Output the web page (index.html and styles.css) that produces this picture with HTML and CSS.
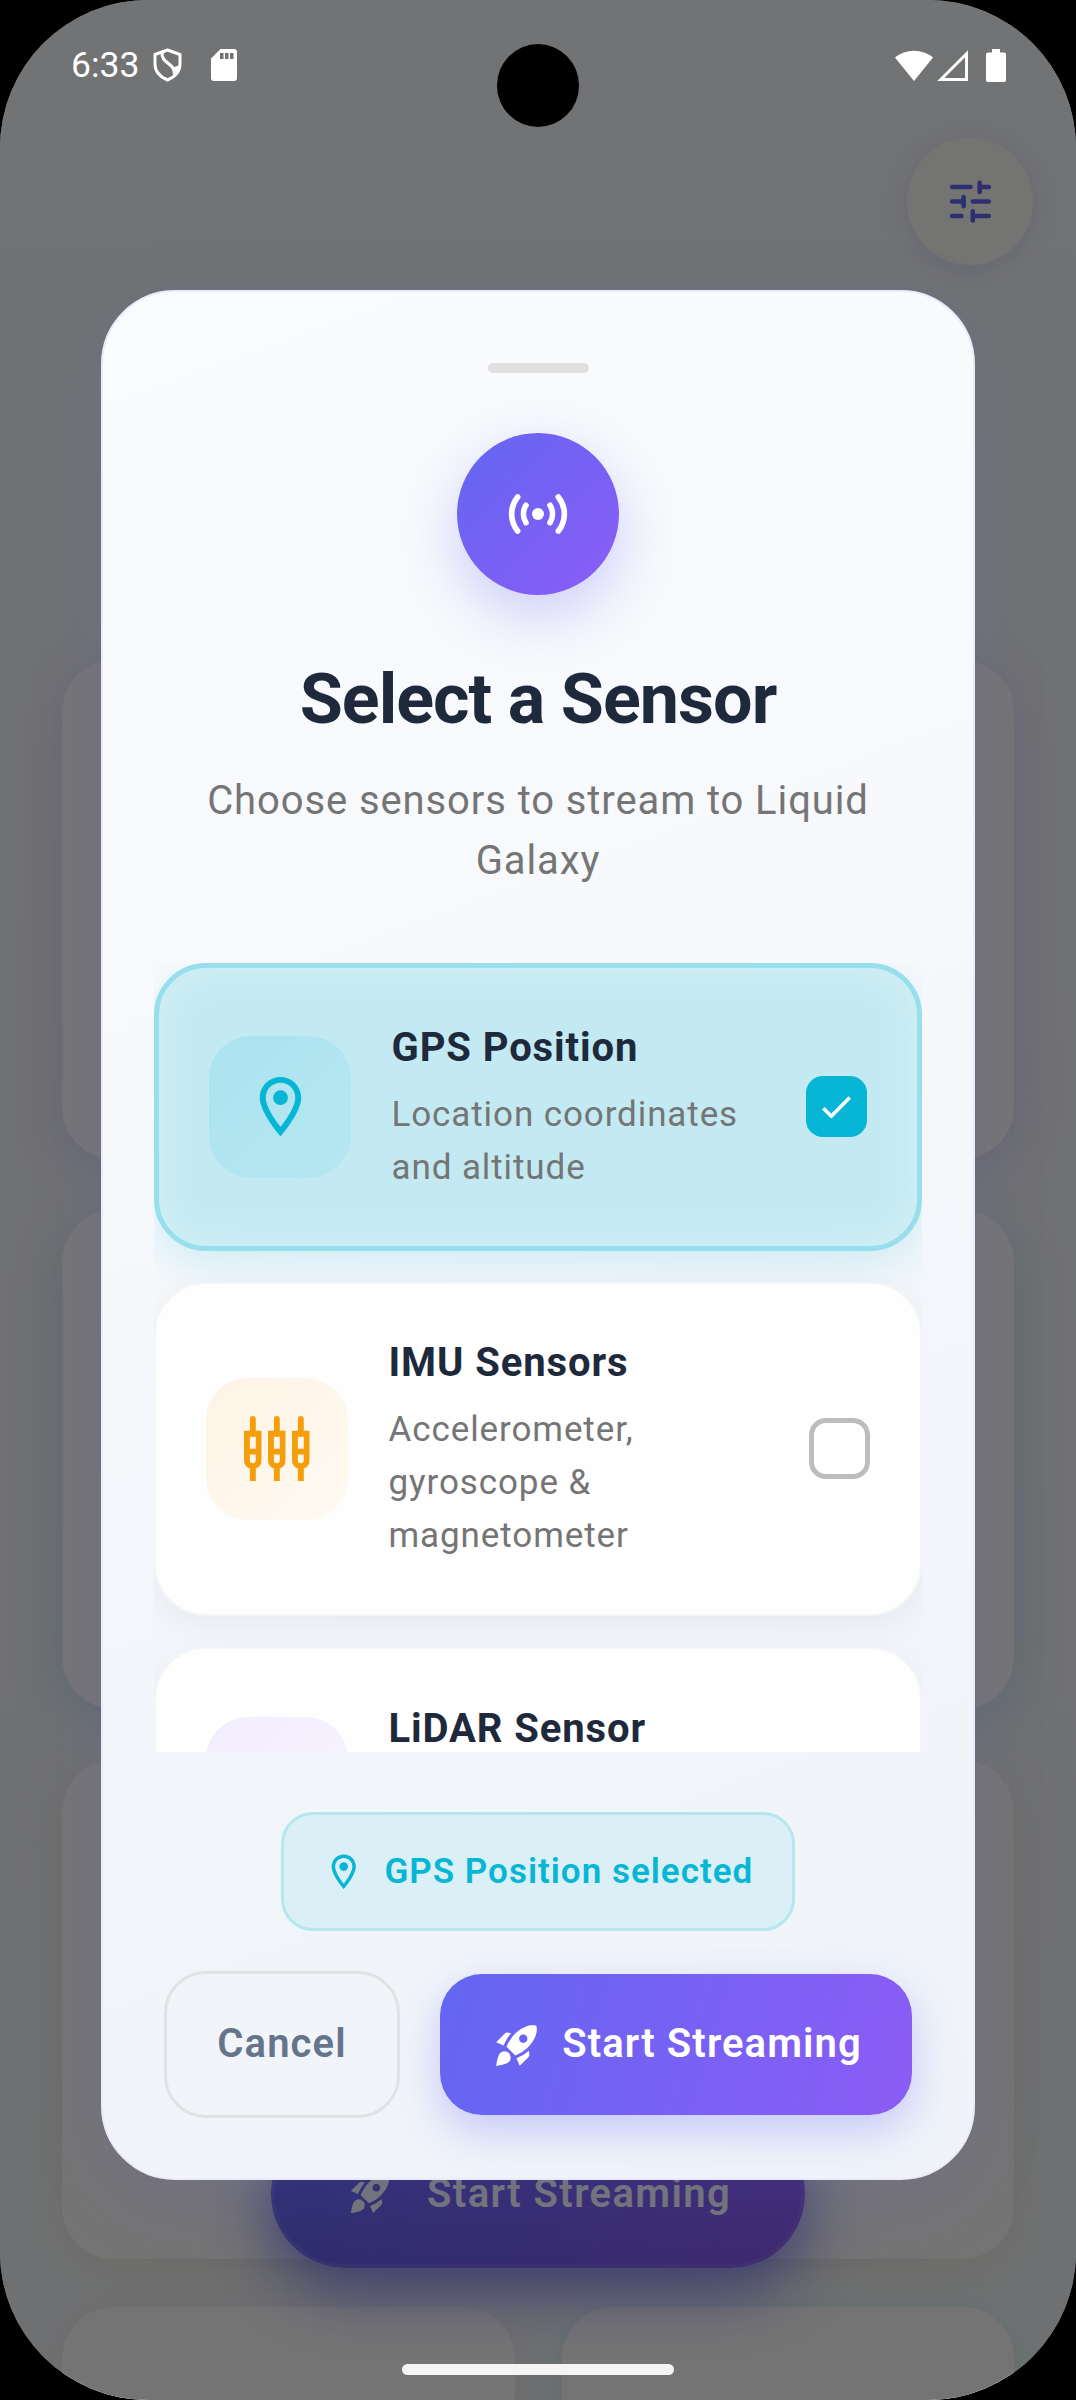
FILE: index.html
```html
<!DOCTYPE html>
<html lang="en">
<head>
<meta charset="utf-8">
<title>Select a Sensor</title>
<link rel="stylesheet" href="styles.css">
</head>
<body>
<svg class="sprite" aria-hidden="true">
  <symbol id="pin" viewBox="0 0 24 24"><path fill="currentColor" d="M12 2C8.13 2 5 5.13 5 9c0 5.25 7 13 7 13s7-7.75 7-13c0-3.87-3.13-7-7-7zM7 9c0-2.76 2.24-5 5-5s5 2.24 5 5c0 2.88-2.88 7.19-5 9.88C9.92 16.21 7 11.85 7 9z"/><circle fill="currentColor" cx="12" cy="9" r="2.5"/></symbol>
  <symbol id="rocket" viewBox="0 0 24 24"><path fill="currentColor" d="M9.19 6.35c-2.04 2.29-3.44 5.58-3.57 5.89L2 10.69l4.05-4.05c.47-.47 1.15-.68 1.81-.55l1.33.26zM11.17 17s3.74-1.55 5.89-3.7c5.4-5.4 4.5-9.62 4.21-10.57-.95-.3-5.17-1.19-10.57 4.21C8.55 9.09 7 12.83 7 12.83L11.17 17zm6.48-2.19c-2.29 2.04-5.58 3.44-5.89 3.57L13.31 22l4.05-4.05c.47-.47.68-1.15.55-1.81l-.26-1.33zM9 18c0 .83-.34 1.58-.88 2.12C6.94 21.3 2 22 2 22s.7-4.94 1.88-6.12A2.996 2.996 0 0 1 9 18zm4-9c0-1.1.9-2 2-2s2 .9 2 2-.9 2-2 2-2-.9-2-2z"/></symbol>
  <symbol id="plug" viewBox="0 0 6 22"><path fill="currentColor" fill-rule="evenodd" d="M4 1a1 1 0 0 0-2 0v4H0v10c0 1.3.84 2.4 2 2.82V22h2v-4.18A3 3 0 0 0 6 15V5H4zM2 7h2v4.1H2zM2 13h2v2a1 1 0 0 1-2 0z"/></symbol>
</svg>
<div class="screen">
  <div class="app">
    <header class="app-bar">
      <div class="round-button">
        <svg viewBox="0 0 24 24"><path fill="none" stroke="currentColor" stroke-width="2" stroke-linecap="round" d="M4 5.7h8M17 5.7h3M16 3.8v4M4 12h4M9 10.1v4M13 12h7M4 18.3h4M14 18.3h6M13 16.3v4"/></svg>
      </div>
    </header>
    <main class="tiles">
      <section class="tile tile-violet"></section>
      <section class="tile tile-cyan"></section>
      <section class="tile tile-amber"></section>
      <div class="tile-row">
        <section class="tile tile-rose"></section>
        <section class="tile tile-green"></section>
      </div>
    </main>
    <div class="fab"><svg><use href="#rocket"/></svg><span>Start Streaming</span></div>
  </div>

  <div class="scrim">
    <div class="dialog">
      <div class="handle"></div>
      <div class="hero">
        <svg viewBox="-99 -99 198 198"><path fill="none" stroke="currentColor" stroke-width="17" stroke-linecap="round" d="M-61 -51a81 81 0 0 0 0 102M61 -51a81 81 0 0 1 0 102M-36 -26a49 49 0 0 0 0 52M36 -26a49 49 0 0 1 0 52"/><circle fill="currentColor" r="18"/></svg>
      </div>
      <h1 class="title">Select a Sensor</h1>
      <p class="subtitle">Choose sensors to stream to Liquid Galaxy</p>

      <div class="sensor-list">
        <div class="sensor sensor-selected">
          <div class="sensor-icon icon-gps"><svg><use href="#pin"/></svg></div>
          <div class="sensor-text"><h2>GPS Position</h2><p>Location coordinates and altitude</p></div>
          <div class="check check-on"><svg viewBox="0 0 29 22"><path fill="none" stroke="currentColor" stroke-width="3.6" d="M1.3 12.3L9.3 20.2L27.7 1.5"/></svg></div>
        </div>
        <div class="sensor sensor-tall">
          <div class="sensor-icon icon-imu"><svg><use href="#plug"/></svg><svg><use href="#plug"/></svg><svg><use href="#plug"/></svg></div>
          <div class="sensor-text"><h2>IMU Sensors</h2><p>Accelerometer, gyroscope &amp; magnetometer</p></div>
          <div class="check"></div>
        </div>
        <div class="sensor sensor-partial">
          <div class="sensor-icon icon-lidar"></div>
          <div class="sensor-text"><h2>LiDAR Sensor</h2></div>
        </div>
      </div>

      <div class="selected-pill"><svg><use href="#pin"/></svg><span>GPS Position selected</span></div>
      <div class="actions">
        <div class="button button-cancel"><span>Cancel</span></div>
        <div class="button button-start"><svg><use href="#rocket"/></svg><span>Start Streaming</span></div>
      </div>
    </div>
  </div>

  <div class="status-bar">
    <div class="status-group">
      <span class="clock">6:33</span>
      <svg class="shield" viewBox="0 0 29 34"><path fill="none" stroke="currentColor" stroke-width="3" stroke-linejoin="round" d="M14.5 2L27 6.5V16c0 8-5.5 13-12.5 16C7.5 29 2 24 2 16V6.5z"/><path fill="none" stroke="currentColor" stroke-width="3.2" d="M9 4c-1 12 13 11 12.500 22"/><path fill="currentColor" d="M27 17c0 6-3 10-6.5 12.5L20 19.5z"/></svg>
      <svg class="sd" viewBox="0 0 26 32"><path fill="currentColor" fill-rule="evenodd" d="M9.5 0H23a3 3 0 0 1 3 3v26a3 3 0 0 1-3 3H3a3 3 0 0 1-3-3V9.5zM9 4v6h3.500V4zm5 0v6h3.500V4zm5 0v6h3.500V4z"/></svg>
    </div>
    <div class="status-group">
      <svg class="wifi" viewBox="0 0 38 32"><path fill="currentColor" d="M19 32L0 8.5a30 30 0 0 1 38 0z"/></svg>
      <svg class="signal" viewBox="0 0 31 31"><path fill="none" stroke="currentColor" stroke-width="3" d="M3.8 29.5L29.5 3.8v25.7z"/></svg>
      <svg class="battery" viewBox="0 0 20 33"><path fill="currentColor" d="M6 0h8v3.5h4a2 2 0 0 1 2 2V31a2 2 0 0 1-2 2H2a2 2 0 0 1-2-2V5.5a2 2 0 0 1 2-2h4z"/></svg>
    </div>
  </div>
  <div class="camera"></div>
  <div class="home-bar"></div>
</div>
</body>
</html>
```
FILE: styles.css
```css
* { box-sizing: border-box; }
body { margin: 0; background: #000; font-family: Roboto, "Noto Sans", sans-serif; }
h1, h2, p { margin: 0; }
svg { display: block; flex: none; }
.sprite { position: absolute; width: 0; height: 0; }

.screen { position: relative; width: 1076px; height: 2400px; overflow: hidden; border-radius: 148px; }

/* page under the dialog */
.app { height: 2400px; overflow: hidden; background: linear-gradient(#f8fafc, #f4f6fa 50%, #f1f5f9); }
.app-bar { display: flex; justify-content: flex-end; padding: 138px 43px 0 0; }
.round-button { display: flex; align-items: center; justify-content: center; width: 126px; height: 127px; border-radius: 50%; background: #fdfcfb; color: #6366f1; box-shadow: 0 5px 26px rgba(99, 102, 241, .16); }
.round-button svg { width: 55px; height: 55px; }
.tiles { display: flex; flex-direction: column; gap: 51px; padding: 395px 62px 0; }
.tile { height: 499px; border-radius: 52px; background: #fefdfd; }
.tile-violet { box-shadow: 0 10px 52px rgba(99, 70, 241, .15); }
.tile-cyan { box-shadow: 0 10px 52px rgba(6, 150, 180, .17); }
.tile-amber { box-shadow: 0 10px 52px rgba(200, 150, 11, .12); }
.tile-rose { box-shadow: 0 10px 40px rgba(239, 68, 68, .12); }
.tile-green { box-shadow: 0 10px 40px rgba(16, 185, 129, .15); }
.tile-row { display: grid; grid-template-columns: 1fr 1fr; gap: 47px; margin-top: -3px; }
.fab { position: absolute; left: 271px; top: 2119px; display: flex; align-items: center; gap: 33px; width: 534px; height: 149px; padding-left: 72px; border: 4px solid rgba(255, 255, 255, .08); border-radius: 74px; background: linear-gradient(106deg, #6366f1, #8b5cf6) border-box; color: #fff; font-size: 40px; font-weight: 600; letter-spacing: 1.4px; white-space: nowrap; box-shadow: 0 21px 63px rgba(99, 102, 241, .8); }
.fab svg { width: 47px; height: 47px; }

/* dialog */
.scrim { position: absolute; inset: 0; display: flex; justify-content: center; align-items: flex-start; padding-top: 290px; background: rgba(0, 0, 0, .54); }
.dialog { display: flex; flex-direction: column; align-items: center; width: 874px; height: 1890px; padding: 71px 51px 0; border: 2px solid #ebeafb; border-radius: 74px; background: linear-gradient(160deg, #fafbfd, #f7f9fc 35%, #f3f6fa 60%, #eff3f9); box-shadow: 0 20px 78px rgba(99, 102, 241, .12); }
.handle { flex: none; width: 101px; height: 10px; border-radius: 5px; background: #e0e0e0; }
.hero { flex: none; display: flex; align-items: center; justify-content: center; width: 162px; height: 162px; margin-top: 60px; border-radius: 50%; background: linear-gradient(135deg, #6366f1, #8b5cf6); color: #fff; box-shadow: 0 20px 58px rgba(99, 102, 241, .3); }
.hero svg { width: 66px; height: 66px; }
.title { margin-top: 64px; color: #1e293b; font-size: 70px; font-weight: 700; line-height: 80px; letter-spacing: -.95px; }
.subtitle { margin-top: 32px; color: #757575; font-size: 40px; line-height: 60px; letter-spacing: .9px; text-align: center; }

.sensor-list { display: flex; flex-direction: column; flex: none; gap: 31px; width: 768px; height: 789px; margin-top: 72px; overflow: hidden; }
.sensor { display: flex; flex: none; align-items: center; padding: 0 50px; border: 2.6px solid #f5f5f5; border-radius: 52px; background: #fefefe; box-shadow: 0 10px 32px rgba(0, 0, 0, .05); }
.sensor-tall { height: 334px; }
.sensor-partial { height: 282px; }
.sensor-selected { height: 287.5px; border: 5.2px solid #97dfec; background: #c3eaf2; box-shadow: 0 16px 42px rgba(6, 182, 212, .14), inset 0 0 42px rgba(255, 255, 255, .3); }
.sensor-icon { display: flex; flex: none; align-items: center; justify-content: center; gap: 6px; width: 142px; height: 142px; border-radius: 42px; }
.sensor-icon svg { width: 71px; height: 71px; }
.icon-gps { background: linear-gradient(135deg, #abe3ef, #b6e7f2); color: #06b6d4; }
.icon-imu { background: linear-gradient(135deg, #fef3e5, #fffaf2); color: #f59e0b; }
.icon-imu svg { width: 17.7px; height: 65px; }
.icon-lidar { background: linear-gradient(135deg, #f2edfe, #f8f5ff); }
.sensor-text { flex: 1; min-width: 0; padding: 0 40px 0 40.5px; }
.sensor-text h2 { color: #1e293b; font-size: 40px; font-weight: 700; line-height: 57px; letter-spacing: .9px; white-space: nowrap; }
.sensor-text p { margin-top: 13px; color: #757575; font-size: 35px; line-height: 52.7px; letter-spacing: .9px; }
.sensor-partial .sensor-text { align-self: flex-start; padding-top: 51px; }
.check { display: flex; flex: none; align-items: center; justify-content: center; width: 61px; height: 61px; border: 5.2px solid #bdbdbd; border-radius: 17px; color: #fff; }
.check-on { border-color: #06b6d4; background: #06b6d4; }
.check-on svg { width: 29px; height: 22px; }

.selected-pill { display: flex; flex: none; align-items: center; gap: 20px; width: 514px; height: 119px; margin-top: 60px; padding-left: 39px; border: 3px solid #b4e7ef; border-radius: 32px; background: #daeff6; color: #06b6d4; font-size: 35px; font-weight: 600; letter-spacing: 1px; white-space: nowrap; }
.selected-pill svg { width: 41.5px; height: 41.5px; }
.selected-pill span { padding-bottom: 1px; }
.actions { display: flex; flex: none; align-items: center; gap: 40px; width: 748px; height: 147px; margin-top: 40px; }
.button { display: flex; align-items: center; justify-content: center; border-radius: 42px; font-size: 40px; font-weight: 600; letter-spacing: 1.1px; white-space: nowrap; }
.button span { padding-bottom: 3px; }
.button-cancel { width: 236px; height: 147px; border: 3px solid #e1e2e3; color: #64748b; }
.button-start { flex: 1; gap: 20px; height: 141px; padding-left: 2px; background: linear-gradient(107deg, #6366f1, #8b5cf6); color: #fff; box-shadow: 0 16px 42px rgba(99, 102, 241, .3); }
.button-start svg { width: 50px; height: 50px; }

/* system chrome */
.status-bar { position: absolute; inset: 0 0 auto; display: flex; justify-content: space-between; height: 130px; padding: 0 70px 0 71px; color: #fff; }
.status-group { display: flex; align-items: center; }
.clock { font-size: 35.5px; }
.shield { width: 29px; height: 34px; margin-left: 13.5px; }
.sd { width: 26px; height: 32px; margin-left: 29px; }
.wifi { width: 38px; height: 32px; }
.signal { width: 31px; height: 31px; margin-left: 4px; }
.battery { width: 20px; height: 33px; margin-left: 18px; }
.camera { position: absolute; left: 497px; top: 44px; width: 82px; height: 83px; border-radius: 50%; background: #000; }
.home-bar { position: absolute; left: 402px; top: 2364px; width: 272px; height: 11px; border-radius: 6px; background: #f4f4f4; }
```
